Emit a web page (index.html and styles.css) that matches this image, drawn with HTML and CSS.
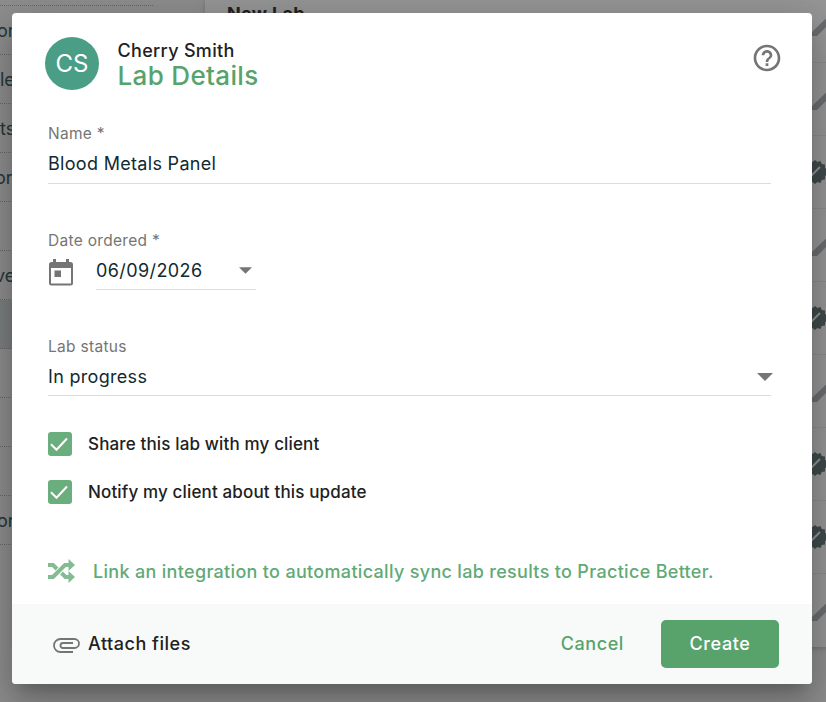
FILE: index.html
```html
<!DOCTYPE html>
<html lang="en">
<head>
<meta charset="utf-8">
<title>Lab Details</title>
<link rel="stylesheet" href="styles.css">
</head>
<body>
<svg class="defs" width="0" height="0">
  <symbol id="pencil" viewBox="0 0 30 30"><path d="M0 29v-4L24 2l4 4L5 29z"/></symbol>
  <symbol id="badge" viewBox="0 0 24 24"><path fill="#414b4c" d="M12 0l2.400 2 3-.9 1.400 2.800 3.100.6.1 3.200 2.300 2.200L23 12l1.300 2.100-2.300 2.200-.1 3.200-3.100.6-1.400 2.800-3-.9L12 24l-2.400-2-3 .9-1.400-2.800-3.100-.6L2 16.300-.3 14.100 1 12-.3 9.900 2 7.700l.1-3.200 3.100-.6L6.600 1.100l3 .9z"/><path d="M7 17l10-10" stroke="#929494" stroke-width="2"/></symbol>
</svg>
<div class="page">
  <nav class="side">
    <div class="item first"></div>
    <div class="item"><span>ory</span></div>
    <div class="item"><span class="in">le</span></div>
    <div class="item"><span class="in">ts</span></div>
    <div class="item"><span class="out">ord</span></div>
    <div class="item"></div>
    <div class="item"><span class="out">ve</span></div>
    <div class="item active"></div>
    <div class="item"></div>
    <div class="item"></div>
    <div class="item"></div>
    <div class="item"><span>or</span></div>
  </nav>
  <main class="sheet">
    <h2>New Lab</h2>
    <div class="line head"><svg class="pencil"><use href="#pencil"/></svg></div>
    <div class="line"><svg class="pencil"><use href="#pencil"/></svg></div>
    <div class="line"><svg class="badge"><use href="#badge"/></svg></div>
    <div class="line"><svg class="pencil"><use href="#pencil"/></svg></div>
    <div class="line"><svg class="badge"><use href="#badge"/></svg></div>
    <div class="line"><svg class="pencil"><use href="#pencil"/></svg></div>
    <div class="line"><svg class="badge"><use href="#badge"/></svg></div>
    <div class="line"><svg class="badge"><use href="#badge"/></svg></div>
    <div class="line last"><svg class="pencil"><use href="#pencil"/></svg></div>
  </main>
</div>
<div class="dialog">
  <header class="header">
    <div class="avatar">CS</div>
    <div class="titles"><div class="client">Cherry Smith</div><div class="title">Lab Details</div></div>
    <svg class="help" viewBox="0 0 24 24"><path d="M11 18h2v-2h-2v2zm1-16C6.480 2 2 6.480 2 12s4.480 10 10 10 10-4.480 10-10S17.520 2 12 2zm0 18c-4.410 0-8-3.590-8-8s3.590-8 8-8 8 3.590 8 8-3.590 8-8 8zm0-14c-2.210 0-4 1.790-4 4h2c0-1.100.9-2 2-2s2 .9 2 2c0 2-3 1.750-3 5h2c0-2.250 3-2.500 3-5 0-2.210-1.790-4-4-4z"/></svg>
  </header>
  <div class="body">
    <section class="field">
      <label class="label">Name *</label>
      <div class="value name">Blood Metals Panel</div>
    </section>
    <section class="field lower">
      <label class="label">Date ordered *</label>
      <div class="daterow">
        <svg class="cal" viewBox="0 0 24 27"><path fill-rule="evenodd" d="M4 0h3v3h10V0h3v3h1.500A2.500 2.500 0 0 1 24 5.500v18.500a2.500 2.500 0 0 1-2.500 2.500h-19A2.500 2.500 0 0 1 0 24V5.500A2.500 2.500 0 0 1 2.500 3H4zM2 9v15.500h20V9zM5.500 11.500h6.500V18H5.500z"/></svg>
        <div class="value date">06/09/2026<svg class="caret small" viewBox="0 0 10 5"><path d="M0 0h10L5 5z"/></svg></div>
      </div>
    </section>
    <section class="field lower">
      <label class="label">Lab status</label>
      <div class="value status">In progress<svg class="caret" viewBox="0 0 10 5"><path d="M0 0h10L5 5z"/></svg></div>
    </section>
    <div class="check share"><span class="box"><svg viewBox="0 0 24 24"><path d="M3 12.200l5.500 5.500L19 6.500"/></svg></span><span>Share this lab with my client</span></div>
    <div class="check"><span class="box"><svg viewBox="0 0 24 24"><path d="M3 12.200l5.500 5.500L19 6.500"/></svg></span><span>Notify my client about this update</span></div>
    <div class="link"><svg class="shuffle" viewBox="0 0 27 24"><path class="stroke" d="M0 6h5l4 4M0 18h5L17 6h5M13.500 14l4 4H22"/><path d="M20.500 0L27 6l-6.500 6zM20.500 12l6.500 6-6.500 6z"/></svg><span>Link an integration to automatically sync lab results to Practice Better.</span></div>
  </div>
  <footer class="footer">
    <svg class="clip" viewBox="0 0 27 15"><path d="M20 14H7.500A6.500 6.500 0 0 1 7.500 1H21.500A4.500 4.500 0 0 1 21.500 10H10A2.500 2.500 0 0 1 10 5H20"/></svg>
    <span class="attach">Attach files</span>
    <button class="cancel">Cancel</button>
    <button class="create">Create</button>
  </footer>
</div>
</body>
</html>
```
FILE: styles.css
```css
* { box-sizing: border-box; }
body { margin: 0; width: 826px; height: 702px; overflow: hidden; background: #8e8e8e; font-family: Inter, "Liberation Sans", sans-serif; color: #212121; }
.defs { position: absolute; }
.page { display: flex; height: 702px; }
.side { width: 205px; flex: none; color: #26383b; font-size: 18px; }
.item { height: 49px; width: 153px; border-bottom: 1px dotted #686868; display: flex; align-items: center; }
.item.first { height: 6px; }
.item.active { width: 205px; background: #7d8081; }
.item span { margin-left: -3px; }
.item .out { margin-left: -5px; }
.item .in { margin-left: 0; }
.sheet { flex: none; width: 641px; height: 647px; background: #969696; box-shadow: 0 1px 5px #707070; overflow: hidden; }
.sheet h2 { margin: 0; height: 0; padding: 4px 0 0 22px; font-size: 18px; line-height: 20px; letter-spacing: .3px; overflow: visible; }
.line { height: 73px; border-bottom: 1px dotted #848484; display: flex; align-items: center; padding: 0 0 7px 607px; }
.line.head { height: 59px; }
.line.last { border: 0; }
.pencil { width: 30px; height: 30px; fill: #6b6e6f; flex: none; }
.head .pencil { margin-top: -15px; }
.badge { width: 24px; height: 24px; overflow: visible; margin: 7px 0 0 -9px; flex: none; }
.dialog { position: absolute; left: 12px; top: 13px; width: 800px; height: 671px; background: #fff; border-radius: 4px; overflow: hidden; box-shadow: 0 11px 15px -7px rgba(0,0,0,.2), 0 24px 38px 3px rgba(0,0,0,.14), 0 9px 46px 8px rgba(0,0,0,.12); display: flex; flex-direction: column; }
.header { height: 104px; flex: none; display: flex; align-items: flex-start; padding: 24px 31px 0 33px; }
.avatar { width: 54px; height: 53px; border-radius: 50%; background: #4a9e86; color: #fff; font-size: 24px; line-height: 53px; text-align: center; }
.titles { margin: 2px 0 0 18.500px; flex: 1; }
.client { font-size: 18px; line-height: 23px; letter-spacing: .32px; font-weight: 500; }
.title { font-size: 26px; line-height: 28px; font-weight: 500; letter-spacing: .33px; color: #57a36b; }
.help { width: 32px; height: 32px; margin-top: 5px; margin-right: -2px; fill: #757575; }
.body { flex: 1; padding: 0 41px 0 36px; }
.field { height: 106px; padding-top: 6px; }
.label { display: block; font-size: 15.500px; line-height: 22px; letter-spacing: .3px; color: #757575; }
.lower .label { padding-top: 1px; height: 22px; }
.value { display: flex; align-items: center; justify-content: space-between; height: 39px; border-bottom: 1px solid #dcdcdc; color: #102a30; font-size: 18px; letter-spacing: .31px; }
.name { margin-top: -1px; height: 40px; padding-bottom: 1px; margin-bottom: 1px; }
.status { height: 39px; padding-top: 1px; }
.caret { width: 16px; height: 8px; margin-right: -2px; fill: #757575; }
.caret.small { width: 13px; height: 7px; margin-right: 4px; }
.daterow { display: flex; }
.cal { width: 24px; height: 27px; margin: 8px 0 0 1px; fill: #757575; }
.date { width: 160px; margin-left: 23px; letter-spacing: .4px; padding-top: 1px; }
.check { display: flex; align-items: center; height: 24px; margin-bottom: 24px; font-size: 17px; letter-spacing: .15px; font-weight: 500; }
.share { margin-top: -3px; }
.box { width: 24px; height: 24px; border-radius: 3px; background: #6aae7d; margin-right: 16px; }
.box svg { display: block; width: 24px; height: 24px; fill: none; stroke: #fff; stroke-width: 2; }
.link { display: flex; align-items: center; height: 24px; margin-top: 55px; color: #61aa75; font-size: 18px; font-weight: 500; letter-spacing: .315px; white-space: nowrap; }
.shuffle { width: 27px; height: 24px; margin-right: 18px; fill: #83bc93; flex: none; }
.shuffle .stroke { fill: none; stroke: #83bc93; stroke-width: 4; }
.footer { height: 80px; flex: none; display: flex; align-items: center; padding: 0 33px 0 41px; background: #f8faf9; }
.clip { width: 27px; height: 15px; margin: 3px 8px 0 0; fill: none; stroke: #757575; stroke-width: 1.800; }
.attach { font-size: 18px; font-weight: 500; letter-spacing: .52px; flex: 1; padding-bottom: 2px; }
button { border: 0; padding: 0 0 2px; font: 500 18px Inter, "Liberation Sans", sans-serif; letter-spacing: .6px; }
.cancel { background: none; color: #57a36b; margin-right: 37px; }
.create { width: 118px; height: 48px; border-radius: 5px; background: #57a36b; color: #fff; }
```
